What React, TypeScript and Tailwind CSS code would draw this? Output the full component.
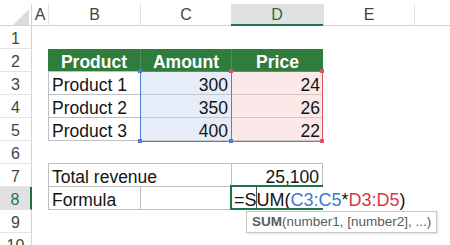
import React from "react";

const HEAD = "text-[16px] leading-[21px] text-center";
const CELL = "text-[17.5px] leading-[20px] pt-[3px] whitespace-nowrap";

function RowHead({ n, active }: { n: number; active?: boolean }) {
  if (active) {
    return (
      <div className="w-[32px] shrink-0 bg-[#e1e1e1] border-r-2 border-r-[#217346] border-b border-b-[#e1e1e1] text-center text-[#217346] text-[16px] leading-[21px] pt-[2px]">
        {n}
      </div>
    );
  }
  return (
    <div className="w-[32px] shrink-0 border-r border-b border-r-[#d4d4d4] border-b-[#e4e4e4] text-center text-[#444] text-[16px] leading-[21px] pt-[2px]">
      {n}
    </div>
  );
}

export default function App() {
  return (
    <div className="relative w-[450px] h-[245px] overflow-hidden bg-white text-[#141414] font-['Liberation_Sans',Arial,sans-serif]">
      <div className="h-[4px]" />
      {/* column headers */}
      <div className="flex h-[22px] text-[#444]">
        <div className="w-[32px] shrink-0 border-r border-b border-[#d4d4d4] flex items-end justify-end pr-[2px]">
          <svg width="16" height="16" viewBox="0 0 16 16">
            <polygon points="16,0 16,16 0,16" fill="#dcdcdc" />
          </svg>
        </div>
        <div className={`w-[16px] shrink-0 border-b border-[#d4d4d4] ${HEAD}`}>A</div>
        <div className={`w-[92px] shrink-0 border-l border-l-[#e2e2e2] border-b border-b-[#d4d4d4] ${HEAD}`}>B</div>
        <div className={`w-[91px] shrink-0 border-l border-l-[#e2e2e2] border-b border-b-[#d4d4d4] ${HEAD}`}>C</div>
        <div className={`w-[92px] shrink-0 bg-[#e1e1e1] border-b-2 border-b-[#217346] text-[#217346] ${HEAD}`}>D</div>
        <div className={`w-[91px] shrink-0 border-l border-l-[#e2e2e2] border-b border-b-[#d4d4d4] ${HEAD}`}>E</div>
        <div className={`flex-1 border-l border-l-[#e2e2e2] border-b border-b-[#d4d4d4] ${HEAD}`}></div>
      </div>

      {/* row 1 */}
      <div className="flex h-[23px]">
        <RowHead n={1} />
        <div className="flex-1" />
      </div>

      {/* row 2 */}
      <div className="flex h-[23px]">
        <RowHead n={2} />
        <div className="w-[16px] shrink-0" />
        <div className={`w-[92px] shrink-0 bg-[#2f7c3c] border-b border-b-[#bfbfbf] text-white font-bold text-center ${CELL}`}>Product</div>
        <div className={`w-[91px] shrink-0 bg-[#2f7c3c] border-l border-l-[#4f8f5b] border-b border-b-[#bfbfbf] text-white font-bold text-center ${CELL}`}>Amount</div>
        <div className={`w-[92px] shrink-0 bg-[#2f7c3c] border-l border-l-[#4f8f5b] border-b border-b-[#bfbfbf] text-white font-bold text-center ${CELL}`}>Price</div>
        <div className="flex-1" />
      </div>

      {[
        ["Product 1", "300", "24"],
        ["Product 2", "350", "26"],
        ["Product 3", "400", "22"],
      ].map((r, i) => (
        <div key={i} className="flex h-[23px]">
          <RowHead n={i + 3} />
          <div className="w-[16px] shrink-0" />
          <div className={`w-[92px] shrink-0 border-l border-b border-[#bfbfbf] pl-[3px] ${CELL}`}>{r[0]}</div>
          <div className={`w-[91px] shrink-0 bg-[#e7edf8] border-l border-b border-[#c4c9d2] text-right pr-[3px] ${CELL}`}>{r[1]}</div>
          <div className={`w-[92px] shrink-0 bg-[#fbe8e9] border-l border-b border-[#d6c4c6] text-right pr-[3px] ${CELL}`}>{r[2]}</div>
          <div className="flex-1" />
        </div>
      ))}

      {/* row 6 */}
      <div className="flex h-[23px]">
        <RowHead n={6} />
        <div className="w-[16px] shrink-0" />
        <div className="w-[92px] shrink-0 border-b border-[#bfbfbf]" />
        <div className="w-[91px] shrink-0 border-b border-[#bfbfbf]" />
        <div className="w-[92px] shrink-0 border-b border-[#bfbfbf]" />
        <div className="flex-1" />
      </div>

      {/* row 7 */}
      <div className="flex h-[23px]">
        <RowHead n={7} />
        <div className="w-[16px] shrink-0" />
        <div className={`w-[92px] shrink-0 border-l border-b border-[#bfbfbf] pl-[3px] ${CELL}`}>Total revenue</div>
        <div className="w-[91px] shrink-0 border-b border-[#bfbfbf]" />
        <div className={`w-[92px] shrink-0 border-l border-r border-b border-[#bfbfbf] text-right pr-[3px] ${CELL}`}>25,100</div>
        <div className="flex-1" />
      </div>

      {/* row 8 */}
      <div className="flex h-[23px]">
        <RowHead n={8} active />
        <div className="w-[16px] shrink-0" />
        <div className={`w-[92px] shrink-0 border-l border-b border-[#bfbfbf] pl-[3px] ${CELL}`}>Formula</div>
        <div className="w-[91px] shrink-0 border-l border-b border-[#bfbfbf]" />
        <div className="w-[92px] shrink-0 border-l border-b border-[#bfbfbf] pl-[2px] text-[18px] leading-[20px] pt-[3px] whitespace-nowrap">
          <span>=SUM(</span>
          <span className="text-[#3f78d4]">C3:C5</span>
          <span>*</span>
          <span className="text-[#d9364b]">D3:D5</span>
          <span>)</span>
        </div>
        <div className="flex-1" />
      </div>

      {/* row 9 */}
      <div className="flex h-[23px]">
        <RowHead n={9} />
        <div className="flex-1" />
      </div>

      {/* row 10 */}
      <div className="flex h-[23px]">
        <RowHead n={10} />
        <div className="flex-1" />
      </div>

      {/* range highlights */}
      <div className="absolute left-[140px] top-[71px] w-[92px] h-[71px] border border-[#4a7fd6]" />
      <div className="absolute left-[231px] top-[71px] w-[92px] h-[71px] border border-[#dc5263]" />
      <div className="absolute left-[138px] top-[69px] w-[4px] h-[4px] bg-[#4a7fd6]" />
      <div className="absolute left-[138px] top-[139px] w-[4px] h-[4px] bg-[#4a7fd6]" />
      <div className="absolute left-[229px] top-[139px] w-[4px] h-[4px] bg-[#4a7fd6]" />
      <div className="absolute left-[229px] top-[69px] w-[4px] h-[4px] bg-[#dc5263]" />
      <div className="absolute left-[320px] top-[69px] w-[4px] h-[4px] bg-[#dc5263]" />
      <div className="absolute left-[320px] top-[139px] w-[4px] h-[4px] bg-[#dc5263]" />

      {/* active cell */}
      <div className="absolute left-[230px] top-[185px] w-[93px] h-[25px] border-l-2 border-t-2 border-b-2 border-[#217346]" />
      <div className="absolute left-[256px] top-[187px] w-[1px] h-[21px] bg-[#555]" />

      {/* tooltip */}
      <div className="absolute left-[246px] top-[211px] w-[191px] h-[22px] bg-white border border-[#c8c8c8] shadow-[1px_1px_2px_rgba(0,0,0,0.12)] pl-[5px] text-[13.5px] leading-[20px] text-[#5b5b5b] whitespace-nowrap">
        <span className="font-bold">SUM</span>(number1, [number2], ...)
      </div>
    </div>
  );
}
